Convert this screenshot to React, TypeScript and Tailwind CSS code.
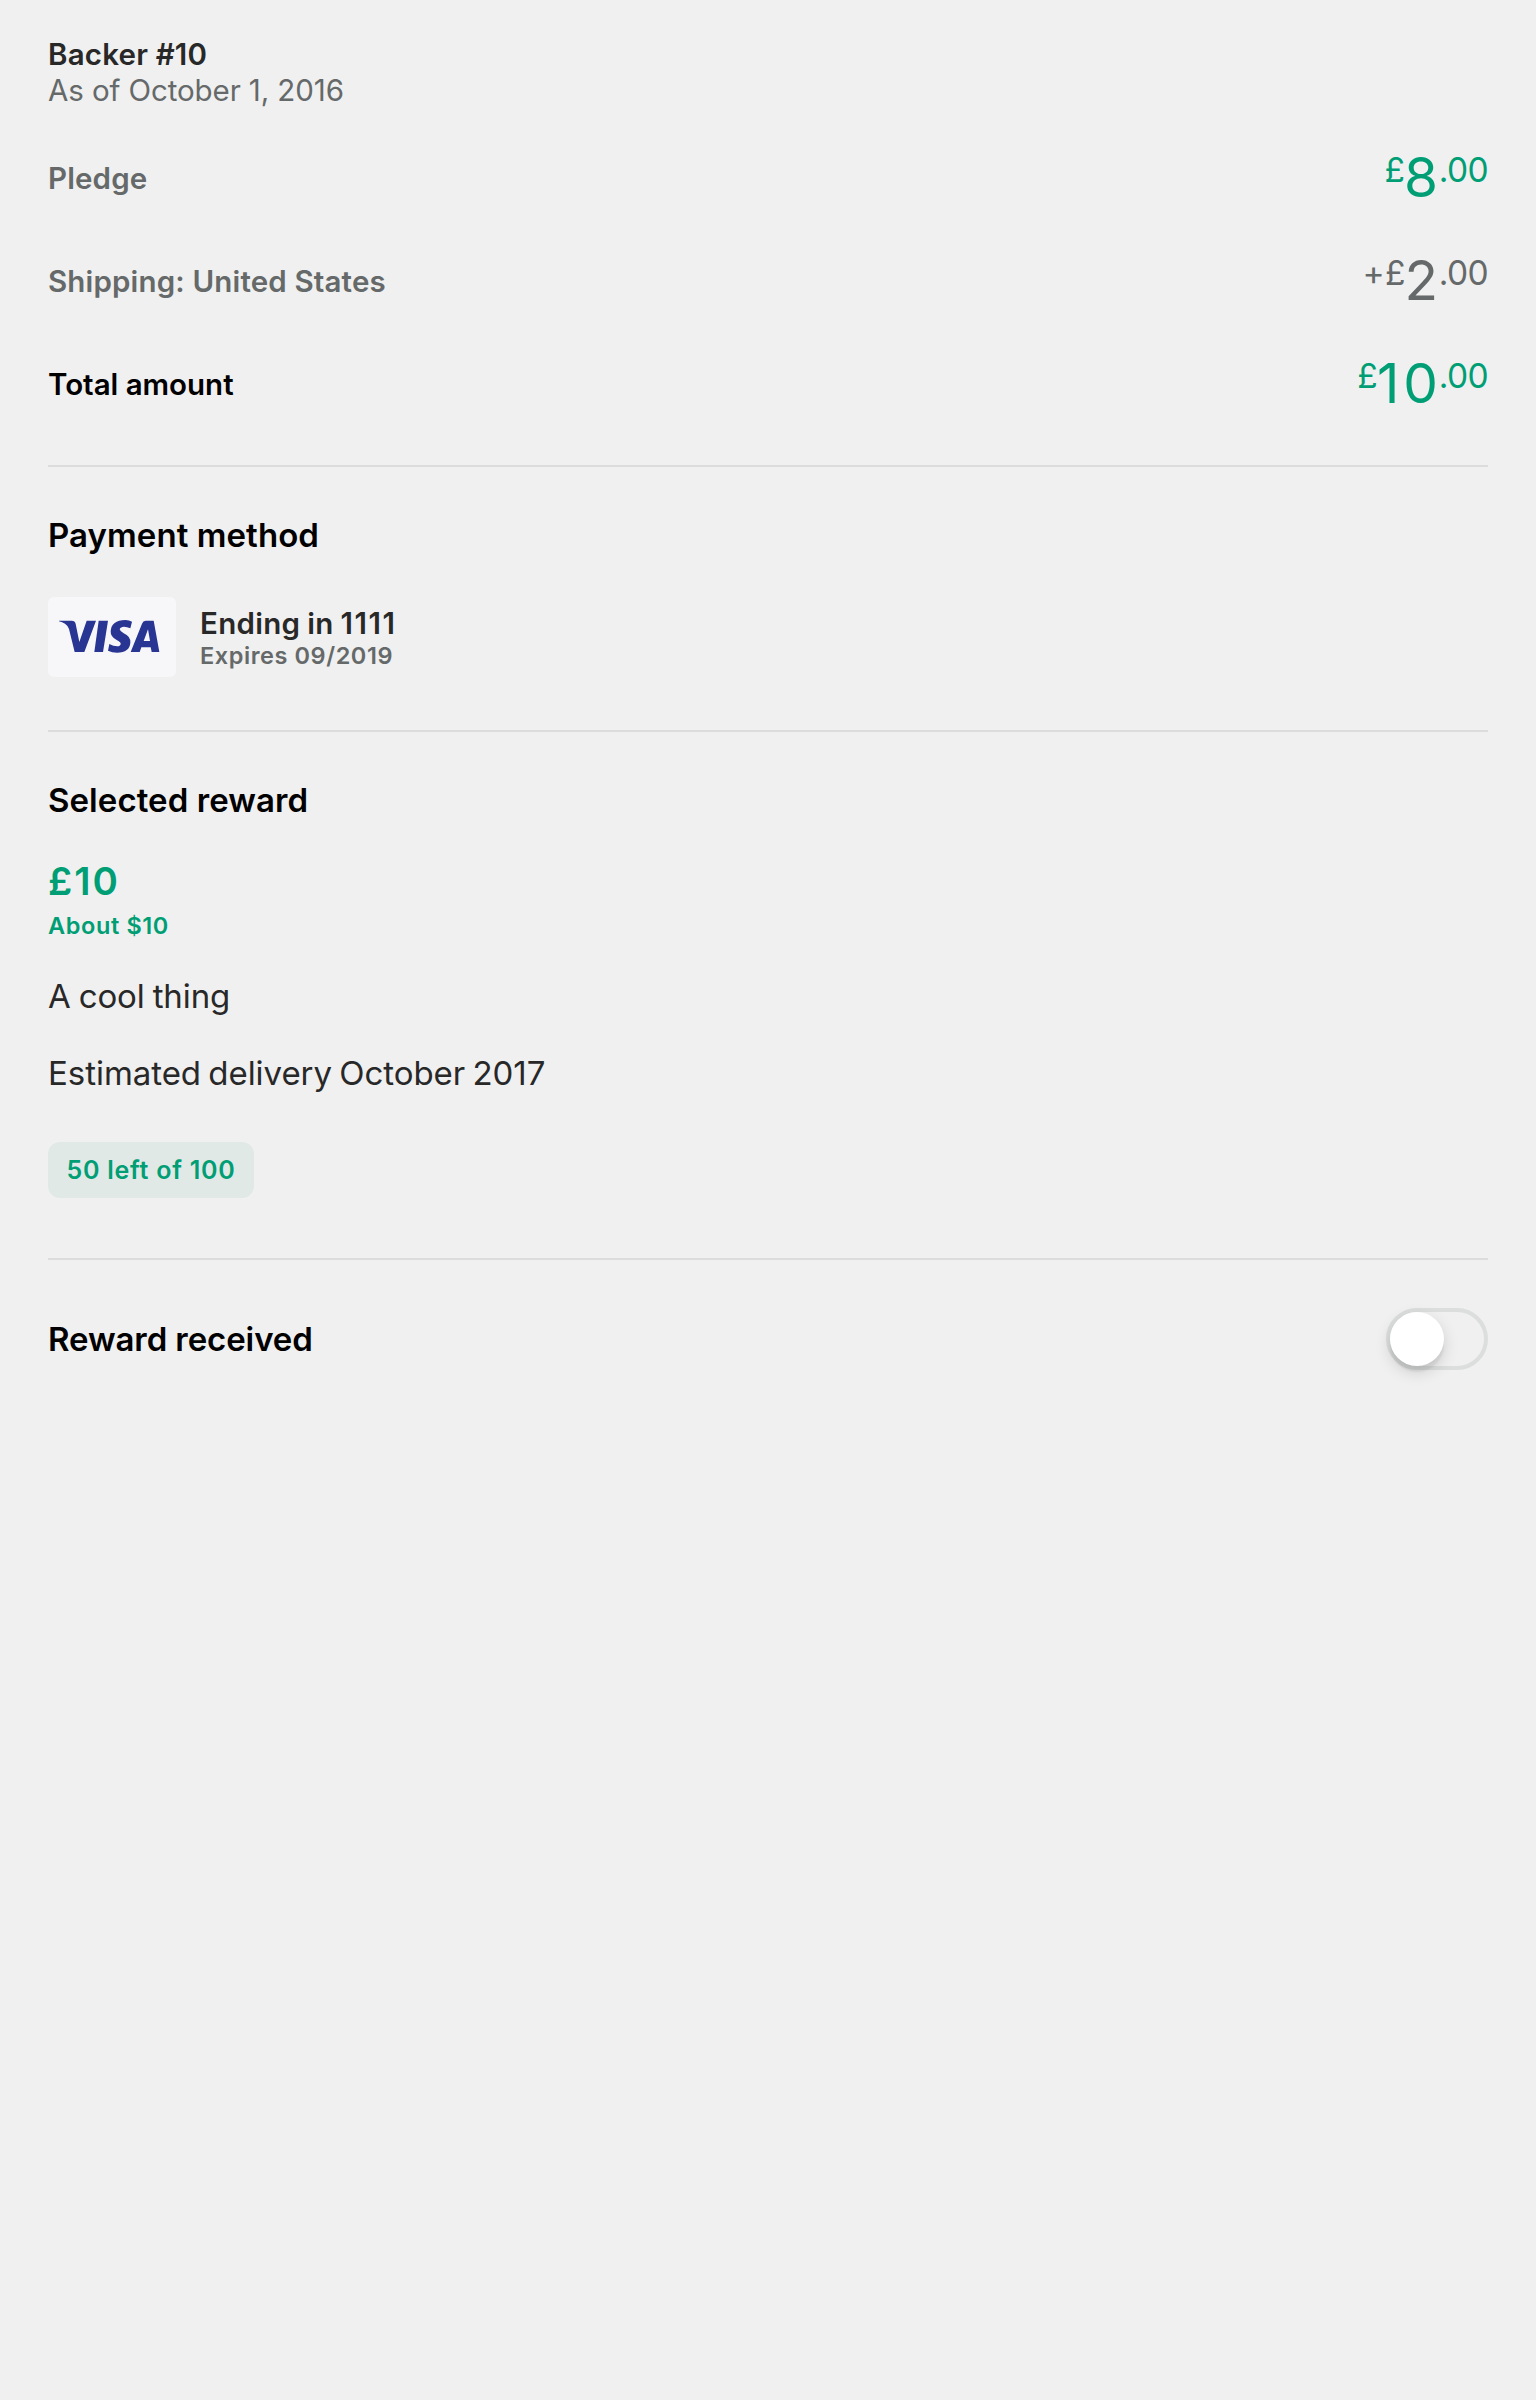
import React, { useState } from 'react';

function Divider() {
  return <div className="h-[2px] bg-[#dcdcdc]" />;
}

type AmountProps = { prefix: string; whole: string; color: string };

function Amount({ prefix, whole, color }: AmountProps) {
  return (
    <div className={`mb-[2px] flex h-[68px] items-start ${color}`}>
      <span className="text-[33.5px] leading-[52px] tracking-[0.3px]">{prefix}</span>
      <span className="-ml-[1.2px] -mr-[3.3px] text-[55px] leading-[66px] tracking-[4px]">{whole}</span>
      <span className="text-[33.5px] leading-[52px] tracking-[-0.6px]">.00</span>
    </div>
  );
}

function VisaLogo() {
  return (
    <svg viewBox="86 121 302 98" className="mr-[5px] mb-px h-[32.7px] w-[100.7px]" fill="#283593" aria-label="Visa">
      <path d="M86 123.500H124Q134 124 136 133L147 187L169 123.500H197L162 217H133L116 148Q112 137 104 132Q96 127 86 125Z" />
      <path d="M205 123.500H233L218 217H192Z" />
      <path d="M305 126L300 146Q286 140 276 142Q268 144 268 149Q269 155 280 161Q301 170 300 189Q298 218 260 219Q245 219 233 213L237 193Q249 200 261 200Q271 199 271 192Q271 187 259 181Q240 171 241 154Q243 122 285 121Q297 121 305 126Z" />
      <path fillRule="evenodd" d="M346 123.500H370L387 217H364L361 203H333L328 217H301L335 132Q338 124 346 123.500ZM353 149L340 184H359Z" />
    </svg>
  );
}

export default function App() {
  const [received, setReceived] = useState(false);

  return (
    <main className="min-h-[2400px] bg-[#f0f0f0] px-12 pt-9 font-['Inter',sans-serif] text-[#282828]">
      <header className="text-[29.5px] leading-9">
        <h1 className="font-semibold tracking-[0.2px]">Backer #10</h1>
        <p className="tracking-[-0.1px] text-[#656969]">As of October 1, 2016</p>
      </header>

      <section className="mt-[19px] text-[29.5px] leading-9">
        <div className="flex h-[103px] items-center justify-between">
          <span className="pb-0.5 font-semibold tracking-[0.14px] text-[#656969]">Pledge</span>
          <Amount prefix="£" whole="8" color="text-[#009e74]" />
        </div>
        <div className="flex h-[103px] items-center justify-between">
          <span className="pb-0.5 font-semibold tracking-[0.16px] text-[#656969]">Shipping: United States</span>
          <Amount prefix="+£" whole="2" color="text-[#656969]" />
        </div>
        <div className="flex h-[103px] items-center justify-between">
          <span className="pb-0.5 font-semibold tracking-[-0.02px] text-black">Total amount</span>
          <Amount prefix="£" whole="10" color="text-[#009e74]" />
        </div>
      </section>

      <div className="mt-[29px]">
        <Divider />
      </div>

      <section className="pt-12 pb-[53px]">
        <h2 className="text-[33px] leading-10 font-semibold tracking-[0.07px] text-black">Payment method</h2>
        <div className="mt-[42px] flex h-20">
          <div className="flex w-32 items-center justify-center rounded-[6px] bg-[#f7f7f9]">
            <VisaLogo />
          </div>
          <div className="ml-6 flex flex-col justify-center pt-[3px]">
            <p className="-mt-px mb-px text-[29.5px] leading-[34px] font-semibold tracking-[0.3px] [word-spacing:-0.8px]">
              Ending in <span className="tracking-[1.5px]">1111</span>
            </p>
            <p className="text-[23.5px] leading-[30px] font-semibold tracking-[0.57px] text-[#656969]">Expires 09/2019</p>
          </div>
        </div>
      </section>

      <Divider />

      <section className="pt-12 pb-[60px]">
        <h2 className="text-[33px] leading-10 font-semibold tracking-[0.07px] text-black">Selected reward</h2>
        <p className="mt-[38px] text-[38.5px] leading-[46px] font-semibold tracking-[2px] text-[#009e74]">£10</p>
        <p className="mt-[7px] text-[23.5px] leading-[30px] font-semibold tracking-[0.62px] text-[#009e74]">About $10</p>
        <p className="mt-[35px] text-[33px] leading-10 tracking-[-0.1px] [word-spacing:-1.2px]">A cool thing</p>
        <p className="mt-[37px] text-[33px] leading-10 tracking-[-0.04px] [word-spacing:-2px]">Estimated delivery October 2017</p>
        <div className="mt-[49px] flex">
          <span className="flex h-14 w-[206px] items-center justify-center rounded-xl bg-[#e1e9e7] pt-0.5 text-[25px] font-semibold tracking-[0.75px] text-[#009e74]">
            50 left of 100
          </span>
        </div>
      </section>

      <Divider />

      <section className="flex items-center justify-between pt-12">
        <h2 className="text-[33px] leading-10 font-semibold tracking-[-0.09px] text-black">Reward received</h2>
        <button
          type="button"
          role="switch"
          aria-checked={received}
          aria-label="Reward received"
          onClick={() => setReceived(!received)}
          className={`flex h-[62px] w-[102px] rounded-full border-4 ${received ? 'justify-end border-[#009e74] bg-[#009e74]' : 'justify-start border-[#dbdedd]'}`}
        >
          <span className="h-[54px] w-[54px] rounded-full bg-white shadow-[0_6px_16px_rgba(0,0,0,0.15),0_6px_2px_rgba(0,0,0,0.06)]" />
        </button>
      </section>
    </main>
  );
}
